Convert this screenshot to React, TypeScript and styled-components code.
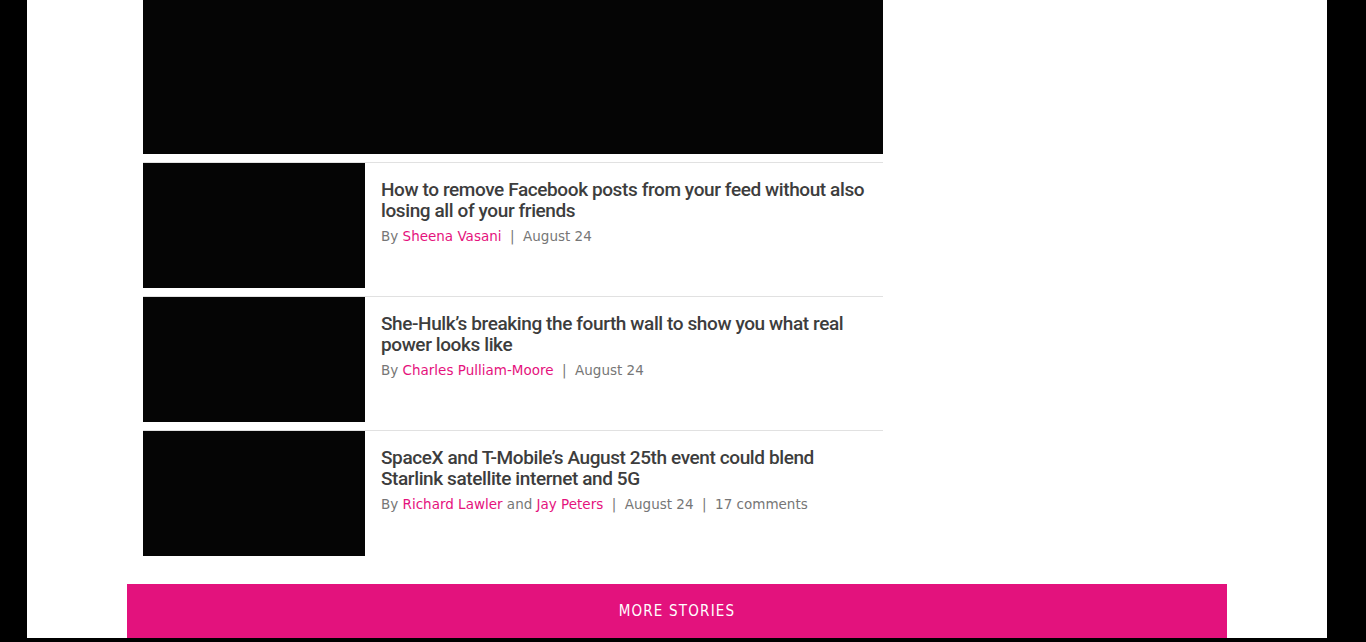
import React from 'react';
import styled, { createGlobalStyle } from 'styled-components';

const GlobalStyle = createGlobalStyle`
  html, body {
    margin: 0;
    padding: 0;
    background: #000;
  }
  body {
    font-family: "DejaVu Sans", sans-serif;
  }
`;

type Story = {
  title: string;
  authors: string[];
  date: string;
  comments?: string;
};

const stories: Story[] = [
  {
    title: 'How to remove Facebook posts from your feed without also losing all of your friends',
    authors: ['Sheena Vasani'],
    date: 'August 24',
  },
  {
    title: 'She-Hulk’s breaking the fourth wall to show you what real power looks like',
    authors: ['Charles Pulliam-Moore'],
    date: 'August 24',
  },
  {
    title: 'SpaceX and T-Mobile’s August 25th event could blend Starlink satellite internet and 5G',
    authors: ['Richard Lawler', 'Jay Peters'],
    date: 'August 24',
    comments: '17 comments',
  },
];

const App: React.FC = () => {
  return (
    <Page>
      <GlobalStyle />
      <Container>
        <MainColumn>
          <Video />
          <StoryList>
            {stories.map((story, index) => (
              <StoryRow key={index}>
                <Thumb />
                <StoryBody>
                  <Title>{story.title}</Title>
                  <Meta>
                    By{' '}
                    {story.authors.map((a, i) => (
                      <React.Fragment key={a}>
                        {i > 0 && ' and '}
                        <Author>{a}</Author>
                      </React.Fragment>
                    ))}
                    <Sep>|</Sep>
                    {story.date}
                    {story.comments && (
                      <>
                        <Sep>|</Sep>
                        {story.comments}
                      </>
                    )}
                  </Meta>
                </StoryBody>
              </StoryRow>
            ))}
          </StoryList>
        </MainColumn>
        <MoreButton>MORE STORIES</MoreButton>
      </Container>
    </Page>
  );
};

const Page = styled.div`
  background: #000;
  height: 642px;
  overflow: hidden;
`;

const Container = styled.div`
  width: 1300px;
  margin-left: 27px;
  height: 638px;
  background: #fff;
  display: flex;
  flex-direction: column;
`;

const MainColumn = styled.div`
  width: 740px;
  margin-left: 116px;
`;

const Video = styled.div`
  height: 154px;
  background: #050505;
  margin-bottom: 8px;
`;

const StoryList = styled.div`
  display: flex;
  flex-direction: column;
`;

const StoryRow = styled.div`
  display: flex;
  border-top: 1px solid #e1e1e1;
  padding-bottom: 8px;
`;

const Thumb = styled.div`
  width: 222px;
  height: 125px;
  flex-shrink: 0;
  background: #050505;
`;

const StoryBody = styled.div`
  padding: 16px 12px 0 16px;
`;

const Title = styled.h2`
  margin: 0 0 6px;
  font-family: Roboto, sans-serif;
  font-weight: 500;
  font-size: 19px;
  line-height: 21px;
  letter-spacing: -0.4px;
  color: #3d3d3d;
`;

const Meta = styled.div`
  font-family: "DejaVu Sans", sans-serif;
  font-size: 13.5px;
  line-height: 18px;
  color: #767676;
`;

const Author = styled.span`
  color: #e5127d;
`;

const Sep = styled.span`
  margin: 0 8.5px;
`;

const MoreButton = styled.div`
  margin: 20px 0 0 100px;
  width: 1100px;
  height: 54px;
  background: #e3127d;
  color: #fff;
  display: flex;
  align-items: center;
  justify-content: center;
  font-family: "DejaVu Sans Condensed", "DejaVu Sans", sans-serif;
  font-size: 15px;
  letter-spacing: 1.2px;
`;

export default App;
